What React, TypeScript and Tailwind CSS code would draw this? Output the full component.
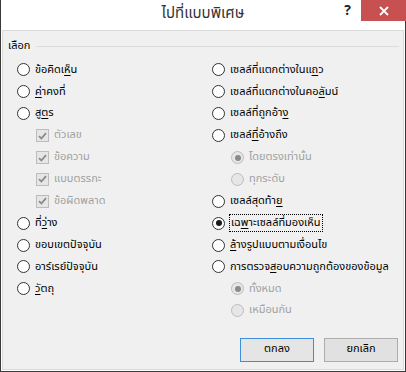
import React from 'react';

type Item = {
  label: [string, string, string];
  kind: 'radio' | 'check';
  sub?: boolean;
  checked?: boolean;
  disabled?: boolean;
  focus?: boolean;
};

const leftItems: Item[] = [
  { label: ['ข้อคิดเ', 'ห็', 'น'], kind: 'radio' },
  { label: ['', 'ค่', 'าคงที่'], kind: 'radio' },
  { label: ['สู', 'ต', 'ร'], kind: 'radio' },
  { label: ['ตัวเลข', '', ''], kind: 'check', sub: true, checked: true, disabled: true },
  { label: ['ข้อความ', '', ''], kind: 'check', sub: true, checked: true, disabled: true },
  { label: ['แบบตรรกะ', '', ''], kind: 'check', sub: true, checked: true, disabled: true },
  { label: ['ข้อผิดพลาด', '', ''], kind: 'check', sub: true, checked: true, disabled: true },
  { label: ['ที่', 'ว่', 'าง'], kind: 'radio' },
  { label: ['ขอบเขตปัจจุบัน', '', ''], kind: 'radio' },
  { label: ['อาร์เรย์ปัจจุบัน', '', ''], kind: 'radio' },
  { label: ['', 'วั', 'ตถุ'], kind: 'radio' },
];

const rightItems: Item[] = [
  { label: ['เซลล์ที่แตกต่างในแ', 'ถ', 'ว'], kind: 'radio' },
  { label: ['เซลล์ที่แตกต่างในคอ', 'ลั', 'มน์'], kind: 'radio' },
  { label: ['เซลล์ที่ถูกอ้า', 'ง', ''], kind: 'radio' },
  { label: ['เซลล์', 'ที่', 'อ้างถึง'], kind: 'radio' },
  { label: ['โดยตรงเท่านั้น', '', ''], kind: 'radio', sub: true, checked: true, disabled: true },
  { label: ['ทุกระดับ', '', ''], kind: 'radio', sub: true, disabled: true },
  { label: ['เซลล์สุดท้า', 'ย', ''], kind: 'radio' },
  { label: ['เฉ', 'พ', 'าะเซลล์ที่มองเห็น'], kind: 'radio', checked: true, focus: true },
  { label: ['', 'ล้', 'างรูปแบบตามเงื่อนไข'], kind: 'radio' },
  { label: ['การตรวจ', 'ส', 'อบความถูกต้องของข้อมูล'], kind: 'radio' },
  { label: ['ทั้งหมด', '', ''], kind: 'radio', sub: true, checked: true, disabled: true },
  { label: ['เหมือนกัน', '', ''], kind: 'radio', sub: true, disabled: true },
];

const Radio = ({ checked, disabled }: { checked?: boolean; disabled?: boolean }) => (
  <span
    className={`flex h-[13px] w-[13px] shrink-0 items-center justify-center rounded-full border ${
      disabled ? 'border-[#bcbcbc] bg-[#e6e6e6]' : 'border-[#333333] bg-white'
    }`}
  >
    {checked && (
      <span className={`h-[6px] w-[6px] rounded-full ${disabled ? 'bg-[#8a8a8a]' : 'bg-[#1a1a1a]'}`} />
    )}
  </span>
);

const Check = ({ checked }: { checked?: boolean }) => (
  <span className="flex h-[13px] w-[13px] shrink-0 items-center justify-center border border-[#bcbcbc] bg-[#e6e6e6]">
    {checked && (
      <svg width="9" height="8" viewBox="0 0 9 8">
        <path d="M1 4.2 L3.4 6.5 L8 1.2" fill="none" stroke="#8a8a8a" strokeWidth="1.8" />
      </svg>
    )}
  </span>
);

const Row = ({ item }: { item: Item }) => {
  const [a, k, b] = item.label;
  const text = (
    <span className={item.disabled ? 'text-[#a0a0a0]' : 'text-black'}>
      {a}
      {k && <u className="underline-offset-2">{k}</u>}
      {b}
    </span>
  );
  return (
    <div className={`flex h-[21.9px] items-center whitespace-nowrap ${item.sub ? 'pl-[19px]' : ''}`}>
      {item.kind === 'radio' ? (
        <Radio checked={item.checked} disabled={item.disabled} />
      ) : (
        <Check checked={item.checked} />
      )}
      <span className="ml-[4px]">
        {item.focus ? (
          <span className="flex h-[18px] items-center border border-dotted border-black px-[1px]">{text}</span>
        ) : (
          <span className="px-[1px]">{text}</span>
        )}
      </span>
    </div>
  );
};

export default function App() {
  return (
    <div className="flex h-[372px] w-[406px] flex-col border-x border-b border-[#3a3a3a] bg-white font-['Tahoma','Noto_Sans_Thai','Noto_Sans','DejaVu_Sans',sans-serif] text-[11px]">
      {/* title bar */}
      <div className="relative flex h-[30px] shrink-0 justify-end">
        <div className="absolute inset-0 flex items-center justify-center pb-[1px] text-[15px] text-[#333333]">
          ไปที่แบบพิเศษ
        </div>
        <div className="relative flex h-[21px] w-[27px] items-center justify-center text-[14px] font-bold leading-none text-[#222222]">
          ?
        </div>
        <div className="relative mr-[-1px] flex h-[21px] w-[45px] items-center justify-center bg-[#c75050]">
          <svg width="10" height="10" viewBox="0 0 10 10">
            <path d="M1 1 L9 9 M9 1 L1 9" stroke="#ffffff" strokeWidth="1.8" />
          </svg>
        </div>
      </div>

      {/* client area */}
      <div className="mx-[1px] mb-[1px] flex flex-1 flex-col border border-[#dadada] bg-[#f0f0f0]">
        <div className="mt-[7px] flex h-[16px] items-center pl-[5px] pr-[4px]">
          <span className="text-black">เลือก</span>
          <span className="ml-[6px] h-px flex-1 bg-[#dcdcdc]" />
        </div>

        <div className="mt-[5px] grid grid-cols-[195px_1fr] pl-[14px]">
          <div className="flex flex-col">
            {leftItems.map((it, i) => (
              <Row key={i} item={it} />
            ))}
          </div>
          <div className="flex flex-col">
            {rightItems.map((it, i) => (
              <Row key={i} item={it} />
            ))}
          </div>
        </div>

        <div className="mt-[16px] flex justify-end gap-[10px] pr-[5px]">
          <button className="flex h-[24px] w-[74px] items-center justify-center border border-[#3c8fd8] bg-[#e5e5e5] text-black">
            ตกลง
          </button>
          <button className="flex h-[24px] w-[74px] items-center justify-center border border-[#adadad] bg-[#e1e1e1] text-black">
            ยกเลิก
          </button>
        </div>
      </div>
    </div>
  );
}
